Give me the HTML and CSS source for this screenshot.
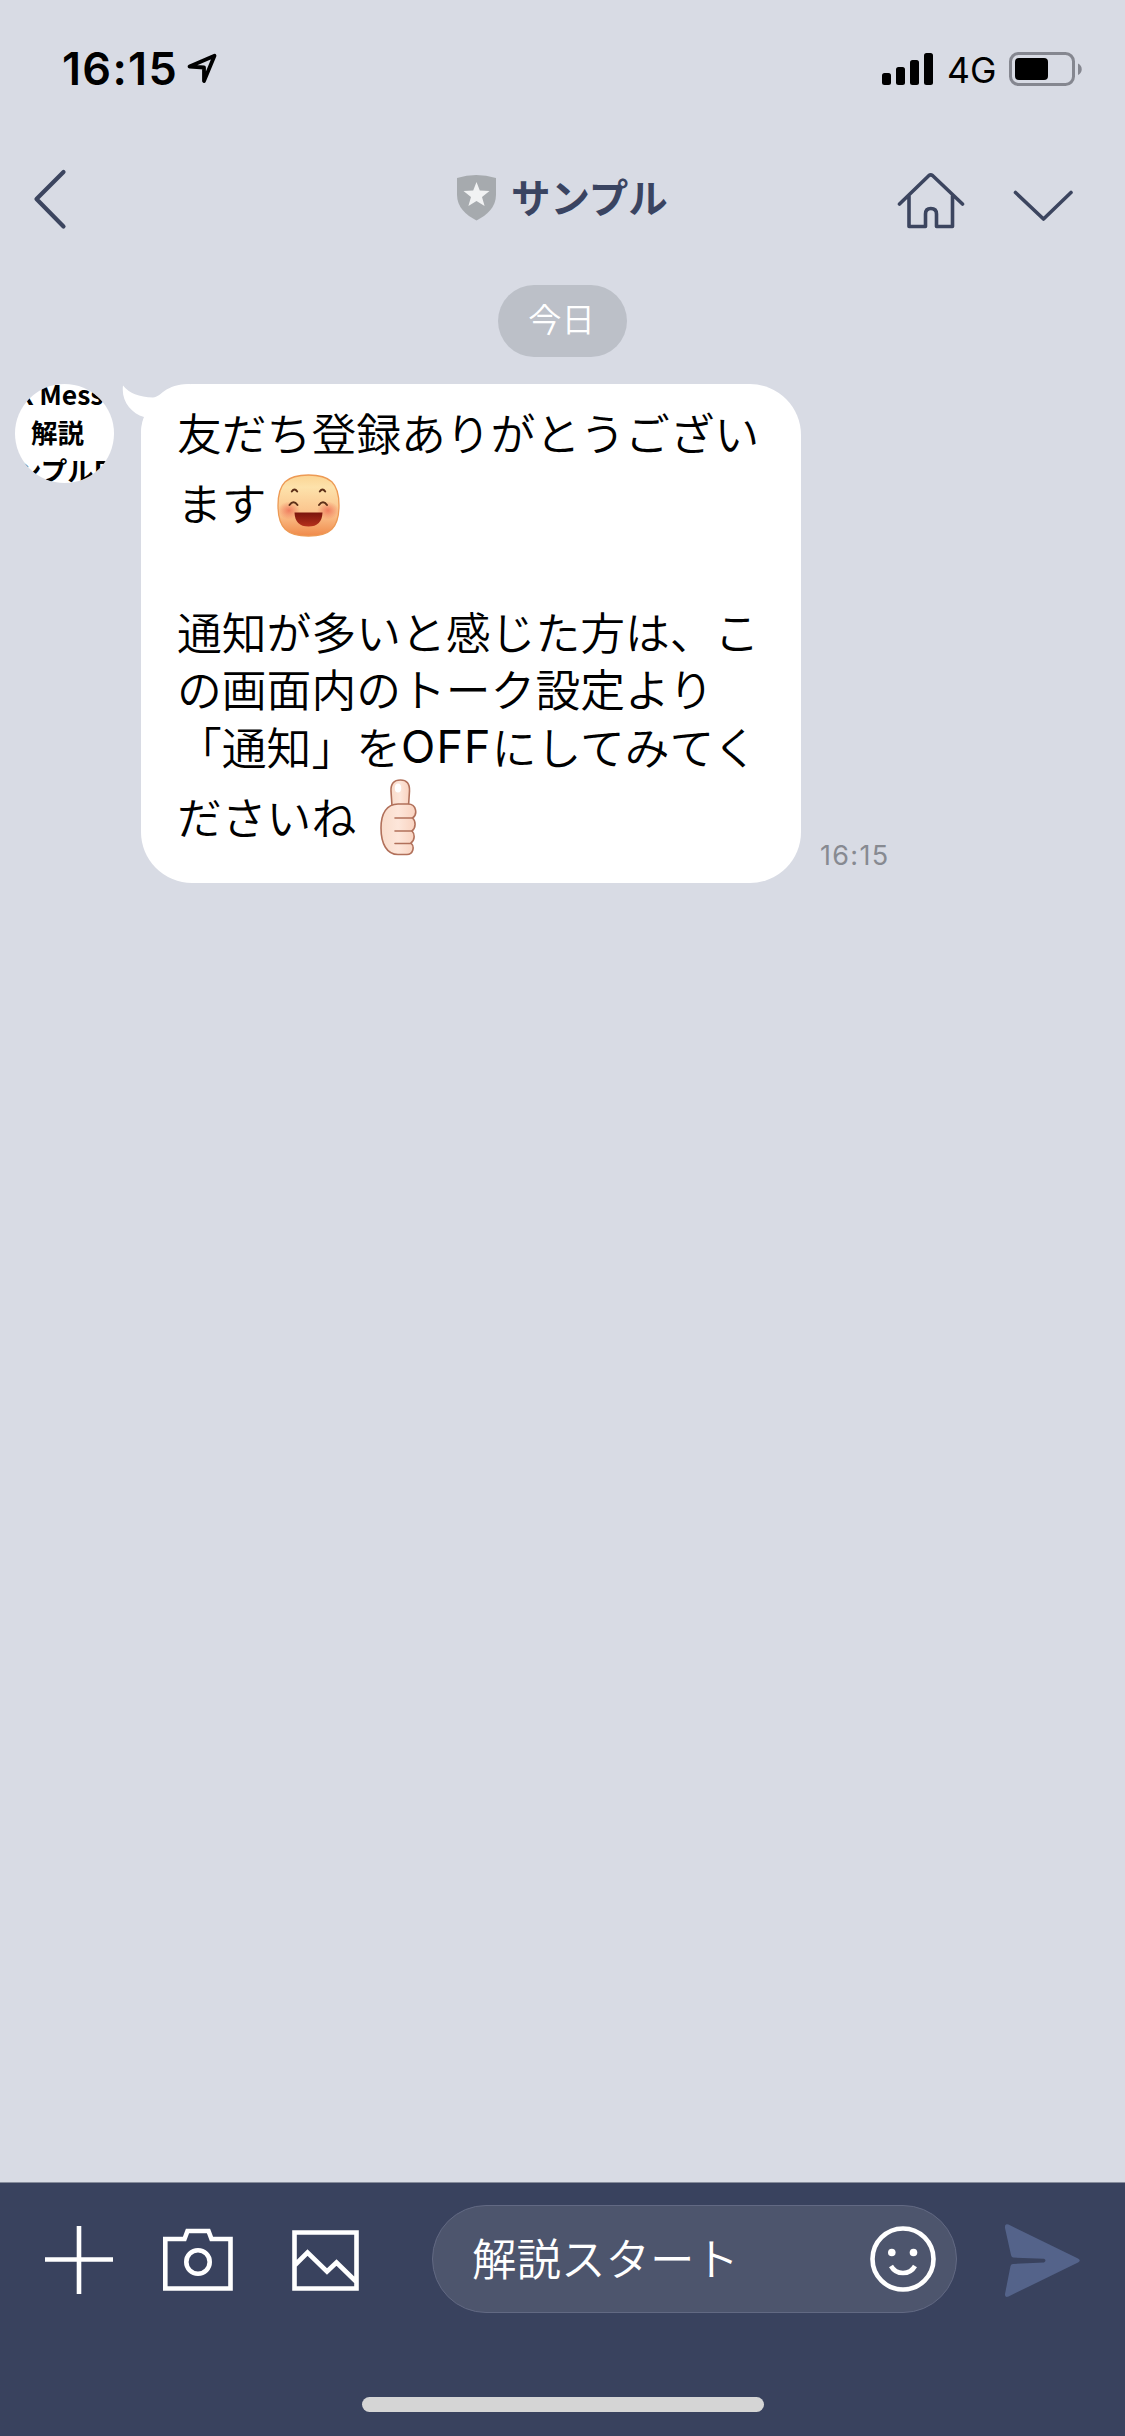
FILE: index.html
```html
<!DOCTYPE html>
<html lang="ja">
<head>
<meta charset="utf-8">
<title>サンプル</title>
<link rel="stylesheet" href="styles.css">
</head>
<body>
<div class="screen">
  <div class="status">
    <span class="clock">16:15</span>
    <svg class="locate" width="34" height="34" viewBox="186 52 34 34"><path d="M189.500 66.500 214.500 55.800 204 81 204 67.500Z" fill="none" stroke="#000" stroke-width="3.800" stroke-linejoin="round"/></svg>
    <svg class="signal" width="52" height="34" viewBox="881 52 52 34"><rect x="882" y="73" width="9" height="12" rx="2.500"/><rect x="896" y="67" width="9" height="18" rx="2.500"/><rect x="910" y="60" width="9" height="25" rx="2.500"/><rect x="924" y="53" width="9" height="32" rx="2.500"/></svg>
    <span class="network">4G</span>
    <svg class="battery" width="76" height="36" viewBox="1008 51 76 36"><rect x="1010.500" y="53.500" width="63" height="31" rx="8" fill="none" stroke="#858790" stroke-width="3"/><rect x="1015" y="58" width="33" height="22" rx="4"/><path d="M1078 63.500C1083 66 1083 72.500 1078 75Z" fill="#858790"/></svg>
  </div>
  <div class="header">
    <svg class="back" width="34" height="62" viewBox="33 168 34 62"><path d="M63.500 172 36.500 199 63.500 226.500" class="line bold"/></svg>
    <div class="title">
      <svg width="39" height="46" viewBox="457 175 39 46"><path d="M457 178Q476 172 496 178V195C496 207 487 215 476.500 220.500 466 215 457 207 457 195Z" fill="#a6aaae"/><path d="M476.500 182 479.800 190.500 489.500 191 482 197 484.600 206 476.500 201 468.400 206 471 197 463.500 191 473.200 190.500Z" fill="#f1f2f3"/></svg>
      <span>サンプル</span>
    </div>
    <svg class="home" width="68" height="58" viewBox="897 172 68 58"><path d="M899.500 204 929 175.500Q930.700 174.200 932.500 175.500L962.500 204M909 196V226.500H925.500V214Q925.500 208.500 930.800 208.500 936.500 208.500 936.500 214V226.500H952.500V196" class="line"/></svg>
    <svg class="more" width="60" height="32" viewBox="1013 190 60 32"><path d="M1015.500 192.500 1043.500 219 1071 192.500" class="line"/></svg>
  </div>
  <div class="chat">
    <div class="day">今日</div>
    <div class="message">
      <div class="avatar"><div class="a1">K Mess</div><div class="a2">解説</div><div class="a3">ンプルB</div></div>
      <div class="bubble">
        <svg class="tail" width="80" height="50" viewBox="122 384 80 50"><path d="M123 385.500Q132 397 153 397.500C162 397 164 384 190 384L200 434H141Q141 424 144 417C131 413 121 401 123 385.500Z" fill="#fff"/></svg>
        <div class="row">友だち登録ありがとうござい</div>
        <div class="row tall">ます<svg class="smile" width="63" height="63" viewBox="0 0 63 63">
          <defs>
            <linearGradient id="face" x1="0" y1="0" x2="0" y2="1"><stop offset="0" stop-color="#fbd493"/><stop offset=".2" stop-color="#fde2ab"/><stop offset=".65" stop-color="#fbc18a"/><stop offset="1" stop-color="#f08a4b"/></linearGradient>
            <radialGradient id="cheek"><stop offset="0" stop-color="#ec6650" stop-opacity=".75"/><stop offset="1" stop-color="#ec6650" stop-opacity="0"/></radialGradient>
            <linearGradient id="mouth" x1="0" y1="0" x2="0" y2="1"><stop offset="0" stop-color="#7b150c"/><stop offset="1" stop-color="#b5301c"/></linearGradient>
          </defs>
          <path d="M31.500 1C53 1 62 9 62 31.500S53 62 31.500 62 1 54 1 31.500 10 1 31.500 1Z" fill="url(#face)" stroke="#ed9a55" stroke-width="1.300"/>
          <ellipse cx="12" cy="36.500" rx="11" ry="9" fill="url(#cheek)"/><ellipse cx="51" cy="36.500" rx="11" ry="9" fill="url(#cheek)"/>
          <path d="M14.800 17.500Q17.500 13.500 20.200 17.500M42.800 17.500Q45.500 13.500 48.200 17.500M12.500 31Q16.500 25.500 20.500 31M42 31Q46 25.500 50 31" fill="none" stroke="#5d3018" stroke-width="2" stroke-linecap="round"/>
          <path d="M17.500 38.500H45.500Q45 52.500 31.500 52.500 18 52.500 17.500 38.500Z" fill="url(#mouth)"/>
        </svg></div>
        <div class="row"></div>
        <div class="row">通知が多いと感じた方は、こ</div>
        <div class="row">の画面内のトーク設定より</div>
        <div class="row">「通知」を<span class="latin">OFF</span>にしてみてく</div>
        <div class="row tall">ださいね<svg class="thumb" width="38" height="78" viewBox="380 778 38 78">
          <defs><linearGradient id="skin" x1="0" y1="0" x2="1" y2="0"><stop offset="0" stop-color="#f9dccb"/><stop offset=".5" stop-color="#fde6da"/><stop offset="1" stop-color="#f9d2bf"/></linearGradient></defs>
          <g fill="url(#skin)" stroke="#b1705a" stroke-width="1.600" stroke-linecap="round" stroke-linejoin="round">
          <path d="M393 806 392 791Q391.500 780 401.500 780 411 780 410.500 791L409.500 806Z"/>
          <path d="M399 804H409C418 804 418.500 815 413.500 818 417 821 417 828 413 831 416 834 416 840 412 843 416 847 414 854.500 408 854.500H399C388 854.500 382 844 382 828 382 813 388 804 399 804Z"/>
          <path d="M396 818H413M396 831H413M396 843.500H412" fill="none"/></g>
          <ellipse cx="399" cy="788" rx="3.200" ry="4.500" fill="#fff"/>
        </svg></div>
      </div>
      <span class="sent">16:15</span>
    </div>
  </div>
  <div class="composer">
    <div class="tools">
      <svg class="plus" width="68" height="68" viewBox="45 2226 68 68"><path d="M79 2226V2294M45 2259.500H113"/></svg>
      <svg class="camera" width="70" height="64" viewBox="163 2228 70 64"><path d="M165.300 2239H184.500L187.500 2231H208.500L211.500 2239H230.500V2288.500H165.300Z"/><circle cx="198" cy="2262" r="11.700"/></svg>
      <svg class="photo" width="67" height="62" viewBox="292 2230 67 62"><path d="M294.500 2232.500H356.500V2288.500H294.500ZM295 2265 307.500 2252.500 327 2271.500 336.500 2262.500 356.500 2282"/></svg>
      <div class="input"><span>解説スタート</span>
        <svg width="68" height="68" viewBox="869 2225 68 68"><circle cx="903" cy="2259" r="30.500"/><path d="M891 2266Q895 2273 903 2273 911 2273 915 2266"/><g class="eyes"><circle cx="891.800" cy="2252.500" r="3.800"/><circle cx="913.500" cy="2252.500" r="3.800"/></g></svg>
      </div>
      <svg class="send" width="78" height="76" viewBox="1004 2223 78 76"><path d="M1008.500 2224.500 1078 2258.500Q1081.500 2260.500 1078 2262.500L1008.500 2296.500Q1004.500 2298 1005 2294L1010.500 2266Q1011 2264.200 1013 2264L1044 2262.500Q1047 2260.500 1044 2258.800L1013 2257.500Q1011.500 2257 1011 2255L1005 2228Q1004.500 2223 1008.500 2224.500Z"/></svg>
    </div>
    <div class="indicator"></div>
  </div>
</div>
</body>
</html>
```
FILE: styles.css
```css
* { box-sizing: border-box; }
body { margin: 0; }
svg { display: block; flex: none; }
.screen {
  width: 1125px; height: 2436px; display: flex; flex-direction: column; overflow: hidden;
  background: #d8dbe4; color: #000;
  font-family: "Noto Sans CJK JP", sans-serif;
}
.status { height: 132px; padding: 51px 0 0 62px; display: flex; align-items: flex-start; font-family: Inter, sans-serif; white-space: nowrap; }
.clock { width: 124px; font-size: 45px; line-height: 36px; font-weight: 600; letter-spacing: 1.3px; }
.locate { margin-top: 1px; }
.signal { margin: 1px 0 0 661px; }
.network { width: 61px; margin-left: 14px; padding-top: 1px; font-size: 35.500px; line-height: 38px; font-weight: 400; }
.battery { margin-left: 0; }
.header { height: 153px; display: flex; align-items: flex-start; padding-left: 33px; }
.line { fill: none; stroke: #3c455f; stroke-width: 3.6; stroke-linecap: round; stroke-linejoin: round; }
.bold { stroke-width: 4.2; }
.back { margin-top: 36px; }
.title { width: 440px; margin: 43px 0 0 390px; display: flex; gap: 15px; color: #3a4461; font-size: 39.500px; line-height: 42px; font-weight: 700; }
.home { margin-top: 40px; }
.more { margin: 58px 0 0 48px; }
.chat { flex: 1; display: flex; flex-direction: column; }
.day { align-self: center; width: 129px; height: 72px; border-radius: 36px; background: #bcc0c8; color: #fff; font-size: 33.500px; line-height: 66px; padding-right: 2px; text-align: center; font-weight: 350; }
.message { display: flex; margin-top: 27px; padding-left: 15px; align-items: flex-start; }
.avatar { width: 99px; height: 99px; border-radius: 50%; overflow: hidden; background: #fff; font-size: 26.500px; font-weight: 700; line-height: 38px; white-space: nowrap; }
.a1 { margin-top: -9px; }
.a2 { padding-left: 16px; }
.bubble { position: relative; width: 660px; height: 499px; margin-left: 27px; padding: 19px 36px 0; border-radius: 51px; background: #fff; font-size: 44.800px; font-weight: 350; }
.tail { position: absolute; left: -19px; top: 0; }
.row { position: relative; height: 57.400px; line-height: 57px; display: flex; white-space: nowrap; }
.tall { height: 84px; line-height: 84px; align-items: center; }
.latin { font-family: Inter, sans-serif; font-weight: 400; letter-spacing: 1.2px; padding-top: 2px; }
.smile { margin: 6px 0 0 10px; }
.thumb { margin: 3px 0 0 23px; }
.sent { align-self: flex-end; margin: 0 0 9px 19px; color: #878a91; font: 27px/36px Inter, sans-serif; letter-spacing: 1.3px; }
.composer { height: 254px; border-top: 1px solid #858b9b; background: #39425e; }
.tools { height: 214px; padding: 22px 0 0 45px; display: flex; align-items: flex-start; }
.tools svg { fill: none; stroke: #fff; stroke-width: 4.6; }
.tools .plus { margin-top: 21px; }
.tools .camera { margin: 23px 0 0 50px; }
.tools .photo { margin: 25px 0 0 59px; }
.input { width: 525px; height: 108px; margin-left: 73px; padding: 0 19px 0 39px; display: flex; align-items: center; justify-content: space-between; border: 1px solid #626983; border-radius: 54px; background: #4d556d; color: #fff; font-size: 44.500px; font-weight: 350; line-height: 104px; }
.input span { height: 108px; }
.tools .eyes { fill: #fff; stroke: none; }
.tools .send { margin: 18px 0 0 47px; fill: #54638a; stroke: none; }
.indicator { width: 402px; height: 15px; margin: 0 auto; border-radius: 8px; background: #d5d5d5; }
```
